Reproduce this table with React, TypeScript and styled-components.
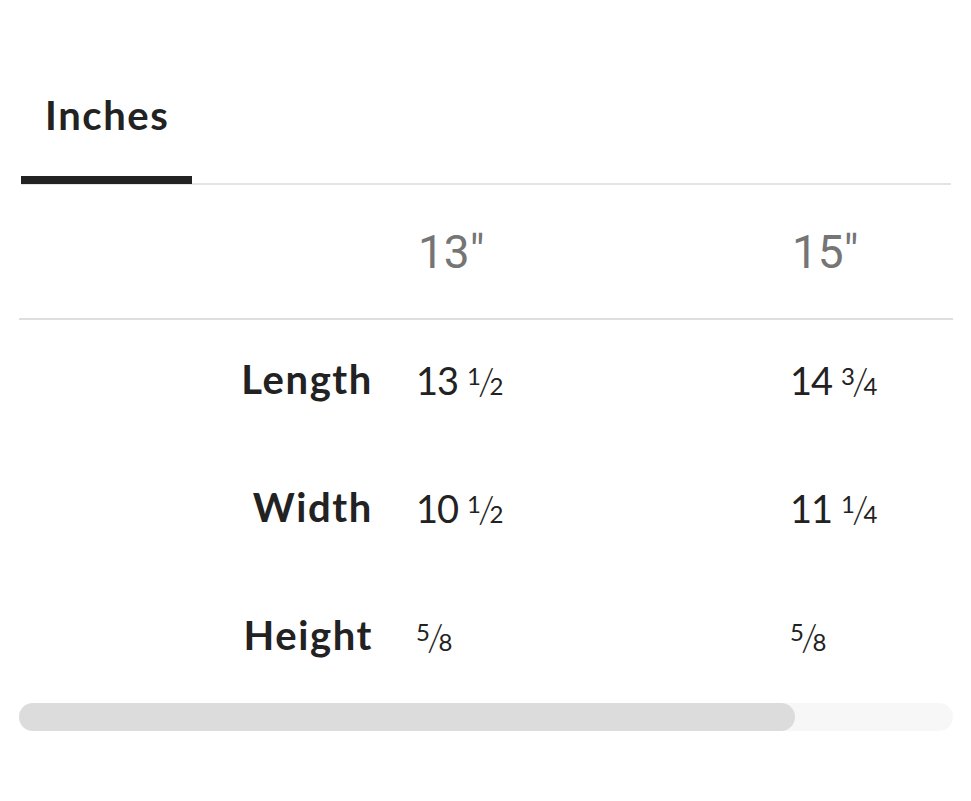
import React from "react";
import styled, { createGlobalStyle } from "styled-components";

const Global = createGlobalStyle`
  html, body { margin: 0; padding: 0; background: #fff; }
  body { font-family: Lato, "Noto Sans", sans-serif; color: #222; }
`;

const VIEW_W = 934;
const LABEL_W = 376;
const COL_W = 374;

const Page = styled.div`
  width: 971px;
  padding: 0 18px 0 19px;
  box-sizing: border-box;
`;

const TabList = styled.div`
  display: flex;
  margin: 91px 2px 0 2px;
  box-shadow: inset 0 -2px 0 #e4e4e4;
`;

const Tab = styled.button<{ $active?: boolean }>`
  font-family: Lato, "Noto Sans", sans-serif;
  font-weight: 700;
  font-size: 40px;
  line-height: 48px;
  letter-spacing: 1.6px;
  color: #222;
  background: none;
  border: 0;
  border-bottom: 8px solid ${(p) => (p.$active ? "#222" : "transparent")};
  margin: 0 0 1px 0;
  padding: 0 22px 37px 24px;
  cursor: pointer;
`;

const Scroller = styled.div`
  width: ${VIEW_W}px;
  overflow-x: auto;
  overflow-y: hidden;
  scrollbar-width: none;
`;

const Grid = styled.div<{ $cols: number }>`
  display: grid;
  grid-template-columns: ${LABEL_W}px repeat(${(p) => p.$cols}, ${COL_W}px);
  width: max-content;
`;

const HeadCell = styled.div`
  height: 133px;
  border-bottom: 2px solid #dedede;
  display: flex;
  align-items: center;
  padding-left: 23px;
  font-family: Roboto, "Liberation Sans", sans-serif;
  font-size: 46px;
  color: #757575;
`;

const Label = styled.div`
  height: 127.667px;
  box-sizing: border-box;
  padding: 0 22px 9px 0;
  display: flex;
  align-items: center;
  justify-content: flex-end;
  font-weight: 700;
  font-size: 40px;
  letter-spacing: 1.6px;
  color: #222;
`;

const Value = styled.div`
  height: 127.667px;
  box-sizing: border-box;
  padding: 0 0 7px 21px;
  display: flex;
  align-items: center;
  font-size: 38px;
  letter-spacing: -1px;
  color: #222;
  white-space: pre;
`;

const Frac = styled.span<{ $gap: boolean }>`
  display: inline-block;
  white-space: nowrap;
  margin-left: ${(p) => (p.$gap ? "9px" : "0")};
`;

const Num = styled.span`
  font-size: 24px;
  letter-spacing: -3px;
  position: relative;
  top: -10px;
`;

const Slash = styled.span`
  font-size: 38px;
  font-weight: 300;
  letter-spacing: -5px;
`;

const Den = styled.span`
  font-size: 24px;
  letter-spacing: 0;
`;

const Track = styled.div`
  width: ${VIEW_W}px;
  height: 28px;
  border-radius: 14px;
  background: #f7f7f7;
  display: flex;
`;

const Thumb = styled.div`
  height: 100%;
  border-radius: 14px;
  background: #dcdcdc;
`;

type Amount = { whole?: string; num?: string; den?: string };

const sizes = ['13"', '15"'];
const rows: [string, Amount[]][] = [
  ["Length", [{ whole: "13", num: "1", den: "2" }, { whole: "14", num: "3", den: "4" }]],
  ["Width", [{ whole: "10", num: "1", den: "2" }, { whole: "11", num: "1", den: "4" }]],
  ["Height", [{ num: "5", den: "8" }, { num: "5", den: "8" }]],
];

function AmountText({ a }: { a: Amount }) {
  return (
    <>
      {a.whole}
      {a.num && (
        <Frac $gap={!!a.whole}>
          <Num>{a.num}</Num>
          <Slash>/</Slash>
          <Den>{a.den}</Den>
        </Frac>
      )}
    </>
  );
}

export default function App() {
  const contentW = LABEL_W + COL_W * sizes.length;
  const thumbW = (VIEW_W / contentW) * VIEW_W;
  return (
    <Page>
      <Global />
      <TabList>
        <Tab $active>Inches</Tab>
      </TabList>
      <Scroller>
        <Grid $cols={sizes.length}>
          <HeadCell />
          {sizes.map((s) => (
            <HeadCell key={s}>{s}</HeadCell>
          ))}
          {rows.map(([label, vals]) => (
            <React.Fragment key={label}>
              <Label>{label}</Label>
              {vals.map((v, i) => (
                <Value key={i}>
                  <AmountText a={v} />
                </Value>
              ))}
            </React.Fragment>
          ))}
        </Grid>
      </Scroller>
      <Track>
        <Thumb style={{ width: thumbW }} />
      </Track>
    </Page>
  );
}
